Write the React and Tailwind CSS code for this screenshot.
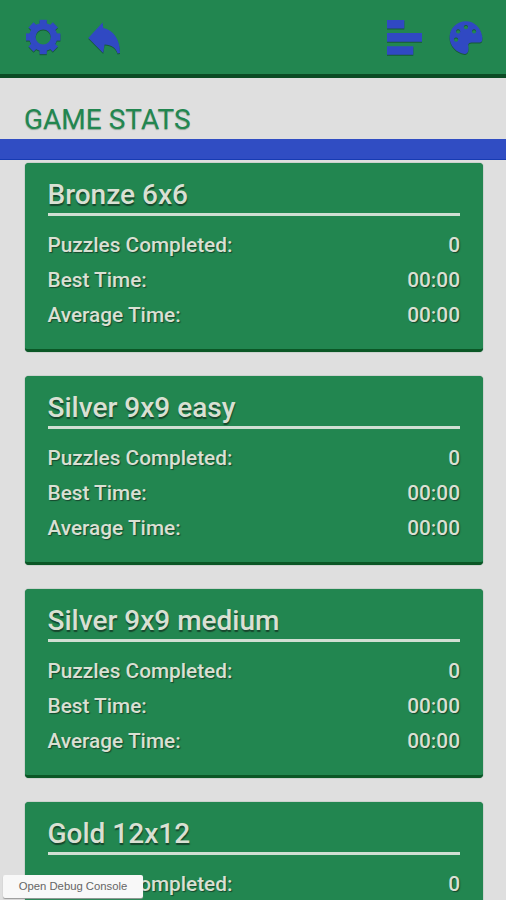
import clsx from "clsx";

const modes = ["Bronze 6x6", "Silver 9x9 easy", "Silver 9x9 medium", "Gold 12x12"];

const emptyStats = [
  { label: "Puzzles Completed:", value: "0" },
  { label: "Best Time:", value: "00:00" },
  { label: "Average Time:", value: "00:00" },
];

const teeth = [0, 45, 90, 135, 180, 225, 270, 315];

const iconStyle = "shrink-0 overflow-visible fill-[#3049c3] drop-shadow-[0px_1px_0.6px_#175a34]";

const GearIcon = () => (
  <svg viewBox="0 0 36 36" className={clsx(iconStyle, "size-9")}>
    <circle cx="18.2" cy="18" r="10.8" fill="none" stroke="#3049c3" strokeWidth="6.4" />
    {teeth.map((angle) => (
      <path key={angle} d="M14.6 6 V0.8 H21.8 V6 Z" transform={`rotate(${angle} 18.2 18)`} />
    ))}
  </svg>
);

const BackIcon = () => (
  <svg viewBox="0 0 36 36" className={clsx(iconStyle, "size-9")}>
    <path d="M1.3 18.9 L15.6 3.5 L16.2 9 C26 11 33.2 20 33 34 L30.6 34.6 C29 28.5 24.5 25.6 17.6 25.4 L16.2 34 Z" />
  </svg>
);

const StatsIcon = () => (
  <svg viewBox="0 0 36 36" className={clsx(iconStyle, "size-9")}>
    <path d="M1 1 H18.3 V9.4 H1 Z M1 14 H36 V22.8 H1 Z M1 27.3 H27.3 V35.8 H1 Z" />
  </svg>
);

const PaletteIcon = () => (
  <svg viewBox="0 0 36 36" className={clsx(iconStyle, "size-9")}>
    <path
      fillRule="evenodd"
      d="M17.9 2.3 C26.2 2.3 32.8 8.5 34.2 17.5 C34.6 21.5 34 23.4 32 23.4 H23.8 C21 23.4 20 24.5 20.2 27 C21.3 32 19.5 35.3 16.7 34.9 C8.2 34 1.6 26.5 1.6 18.5 C1.6 9.5 8.9 2.3 17.9 2.3 Z
        M10.1 10.3 a2.1 2.1 0 1 0 0.1 0 Z M17.9 6 a2.1 2.1 0 1 0 0.1 0 Z M26 10.3 a2.1 2.1 0 1 0 0.1 0 Z M8 18.5 a2.1 2.1 0 1 0 0.1 0 Z"
    />
  </svg>
);

const StatsCard = ({ title }) => (
  <section className="mb-6 h-[189px] shrink-0 rounded-[4px] border-b-[3px] border-[#0b5726] bg-[#228650] px-[23px] pt-[14px] text-[#d9e0d3] shadow-[0_0_1px_#176036]">
    <h2 className="h-9 text-[28px] leading-[35px] font-medium whitespace-nowrap [text-shadow:0.5px_1.5px_1px_#17472d]">
      {title}
    </h2>
    <div className="h-[3px] bg-[#d0dfd3]" />
    <dl className="pt-[12px]">
      {emptyStats.map(({ label, value }) => (
        <div
          key={label}
          className="flex h-[35px] items-center justify-between text-[20.8px] font-medium [text-shadow:1px_1px_1px_#17472d]"
        >
          <dt>{label}</dt>
          <dd>{value}</dd>
        </div>
      ))}
    </dl>
  </section>
);

export default function App() {
  return (
    <div className="relative flex h-[900px] w-[506px] flex-col overflow-hidden bg-[#dfdfdf] font-[Roboto,sans-serif]">
      <header className="flex h-[78px] shrink-0 items-start justify-between border-b-[4px] border-[#0b4b24] bg-[#228650] pt-[19px] pr-[22px] pl-[25px]">
        <div className="flex gap-[26px]">
          <GearIcon />
          <BackIcon />
        </div>
        <div className="flex gap-[26px]">
          <StatsIcon />
          <PaletteIcon />
        </div>
      </header>

      <h1 className="h-[61px] shrink-0 pt-[22px] pl-6 text-[28px] leading-10 text-[#228650] [text-shadow:0_1px_1px_#8fa597]">
        GAME STATS
      </h1>
      <div className="h-[21px] shrink-0 border-b border-[#173bb2] bg-[#304dc3]" />

      <main className="flex min-h-0 flex-1 flex-col overflow-hidden pt-[3px] pr-[23px] pl-[24.5px]">
        {modes.map((title) => (
          <StatsCard key={title} title={title} />
        ))}
      </main>

      <button className="absolute top-[875px] left-[3px] h-[23px] w-[140px] rounded-xs bg-[#f8f8f8] font-['Liberation_Sans',sans-serif] text-[11.3px] text-[#666] shadow-[0_1px_1px_#999]">
        Open Debug Console
      </button>
    </div>
  );
}
